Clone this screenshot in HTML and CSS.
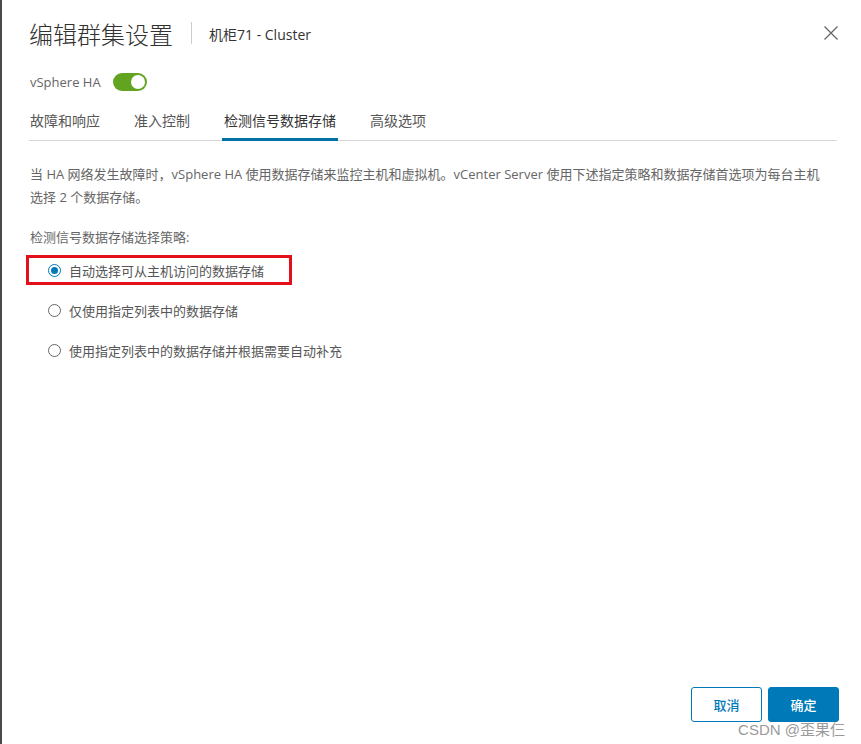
FILE: index.html
```html
<!DOCTYPE html>
<html lang="zh-CN">
<head>
<meta charset="utf-8">
<title>编辑群集设置</title>
<link rel="stylesheet" href="styles.css">
</head>
<body>
<div class="modal">
  <header class="head">
    <h1 class="title">编辑群集设置</h1>
    <span class="divider"></span>
    <span class="subtitle">机柜71 - Cluster</span>
    <button class="close" aria-label="关闭">
      <svg width="16" height="16" viewBox="0 0 16 16"><path d="M1.5 1.5 L14.5 14.5 M14.5 1.5 L1.5 14.5" stroke="#666" stroke-width="1.3" fill="none"/></svg>
    </button>
  </header>

  <div class="ha-row">
    <span class="ha-label">vSphere HA</span>
    <span class="toggle"><span class="knob"></span></span>
  </div>

  <nav class="tabs">
    <span class="tab">故障和响应</span>
    <span class="tab">准入控制</span>
    <span class="tab active">检测信号数据存储</span>
    <span class="tab">高级选项</span>
  </nav>

  <section class="content">
    <p class="desc">当 HA 网络发生故障时，vSphere HA 使用数据存储来监控主机和虚拟机。vCenter Server 使用下述指定策略和数据存储首选项为每台主机<br>选择 2 个数据存储。</p>
    <p class="label">检测信号数据存储选择策略:</p>
    <div class="options">
      <label class="option highlight"><span class="radio checked"></span>自动选择可从主机访问的数据存储</label>
      <label class="option"><span class="radio"></span>仅使用指定列表中的数据存储</label>
      <label class="option"><span class="radio"></span>使用指定列表中的数据存储并根据需要自动补充</label>
    </div>
  </section>

  <footer class="foot">
    <button class="btn outline">取消</button>
    <button class="btn primary">确定</button>
  </footer>
</div>
<div class="watermark">CSDN @歪果仨</div>
</body>
</html>
```

FILE: styles.css
```css
* { box-sizing: border-box; }
html, body { margin: 0; padding: 0; height: 100%; }
body {
  background: #fff;
  font-family: "Open Sans", "Noto Sans CJK SC", sans-serif;
  color: #565656;
  border-left: 2px solid #4a4a4a;
  position: relative;
}
.modal {
  height: 744px;
  display: flex;
  flex-direction: column;
  padding: 0 22px 22px 27px;
}
.head {
  display: flex;
  align-items: center;
  height: 36px;
  margin-top: 15px;
}
.title {
  margin: 0;
  font-size: 24px;
  font-weight: 300;
  color: #313131;
  font-family: "Noto Sans CJK SC", sans-serif;
}
.divider {
  width: 1px;
  height: 22px;
  background: #ccc;
  margin: 0 17px 0 18px;
}
.subtitle {
  font-size: 14px;
  color: #333;
  margin-top: 1px;
}
.close {
  margin-left: auto;
  margin-right: 0;
  background: none;
  border: 0;
  padding: 0;
  width: 16px;
  height: 16px;
  display: flex;
}
.ha-row {
  display: flex;
  align-items: center;
  margin-top: 22px;
  height: 18px;
  padding-left: 1px;
}
.ha-label { font-size: 13px; color: #666; }
.toggle {
  width: 34px;
  height: 18px;
  border-radius: 9px;
  background: #62a420;
  margin-left: 12px;
  position: relative;
  display: inline-block;
}
.knob {
  position: absolute;
  right: 2px;
  top: 2px;
  width: 14px;
  height: 14px;
  border-radius: 50%;
  background: #fff;
}
.tabs {
  display: flex;
  margin-top: 16px;
  border-bottom: 1px solid #d7d7d7;
  margin-right: 2px;
  padding-left: 1px;
}
.tab {
  font-size: 14px;
  color: #565656;
  font-family: "Noto Sans CJK SC", sans-serif;
  padding: 3px 2px 8px;
  margin-right: 30px;
  border-bottom: 3px solid transparent;
  margin-bottom: -1px;
}
.tab:first-child { margin-left: -2px; }
.tab.active { color: #333; border-bottom-color: #0072a3; }
.content { padding-top: 12px; padding-left: 1px; }
.desc {
  margin: 10px 0 0 0;
  font-size: 13px;
  line-height: 23px;
  color: #666;
}
.label {
  margin: 18px 0 0 0;
  font-size: 13px;
  line-height: 20px;
  color: #666;
}
.options {
  display: flex;
  flex-direction: column;
  align-items: flex-start;
  gap: 10px;
  margin-top: 8px;
}
.option {
  display: flex;
  align-items: center;
  font-size: 13px;
  color: #565656;
  height: 30px;
  padding-left: 22px;
  margin-left: -4px;
}
.option.highlight { border: 3px solid #e3101b; padding-left: 19px; width: 266px; }
.radio {
  width: 13px;
  height: 13px;
  border-radius: 50%;
  border: 1px solid #666;
  margin-right: 8px;
  flex: none;
  position: relative;
}
.radio.checked { border: 1px solid #0079b8; }
.radio.checked::after {
  content: "";
  position: absolute;
  left: 2px; top: 2px;
  width: 7px; height: 7px;
  border-radius: 50%;
  background: #0079b8;
}
.foot {
  margin-top: auto;
  display: flex;
  justify-content: flex-end;
  gap: 6px;
}
.btn {
  width: 71px;
  height: 35px;
  border-radius: 3px;
  font-size: 13px;
  font-family: "Noto Sans CJK SC", sans-serif;
  font-weight: 500;
  cursor: pointer;
}
.btn.outline { background: #fff; border: 1px solid #0079b8; color: #0079b8; }
.btn.primary { background: #0079b8; border: 1px solid #0079b8; color: #fff; }
.watermark {
  position: absolute;
  right: 16px;
  bottom: 5px;
  font-size: 15px;
  color: #9a9a9a;
  font-family: "Liberation Sans", "Noto Sans CJK SC", sans-serif;
}
```
